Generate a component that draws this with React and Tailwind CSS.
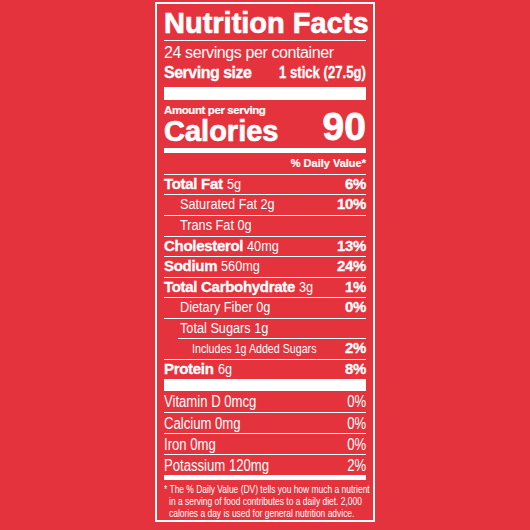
const sans = "font-['Liberation_Sans',Arial,sans-serif]";

const rows = [
  { label: 'Total Fat', value: '5g', dv: '6%', h: 'h-[19px]' },
  { label: 'Saturated Fat 2g', dv: '10%', indent: 1, h: 'h-[20px]' },
  { label: 'Trans Fat 0g', indent: 1, h: 'h-[20px]' },
  { label: 'Cholesterol', value: '40mg', dv: '13%', h: 'h-[19px]' },
  { label: 'Sodium', value: '560mg', dv: '24%', h: 'h-[20px]' },
  { label: 'Total Carbohydrate', value: '3g', dv: '1%', h: 'h-[19px]' },
  { label: 'Dietary Fiber 0g', dv: '0%', indent: 1, h: 'h-[20px]' },
  { label: 'Total Sugars 1g', indent: 1, h: 'h-[19px]', ruleIndent: true },
  { label: 'Includes 1g Added Sugars', dv: '2%', indent: 2, h: 'h-[20px]' },
  { label: 'Protein', value: '6g', dv: '8%', h: 'h-[19px]', last: true },
];

const vitamins = [
  { label: 'Vitamin D 0mcg', dv: '0%', h: 'h-[21px]' },
  { label: 'Calcium 0mg', dv: '0%', h: 'h-[20px]' },
  { label: 'Iron 0mg', dv: '0%', h: 'h-[20px]' },
  { label: 'Potassium 120mg', dv: '2%', h: 'h-[20px]', last: true },
];

// condensed text: no narrow face is installed, so squeeze Liberation Sans
function Cond({ children, right, className = '' }) {
  return (
    <span className={`inline-block whitespace-nowrap scale-x-[0.82] ${right ? 'origin-right' : 'origin-left'} ${className}`}>
      {children}
    </span>
  );
}

function Rule({ indent }) {
  return <div className={`h-px bg-white ${indent ? 'ml-[14px]' : ''}`} />;
}

function NutrientRow({ row }) {
  const pad = row.indent === 2 ? 'pl-[28px]' : row.indent === 1 ? 'pl-[16px]' : '';
  return (
    <>
      <div className={`${row.h} ${sans} flex justify-between items-start text-[15px] leading-[17px] ${pad}`}>
        <span className="whitespace-nowrap">
          {row.value ? (
            <>
              <b className="font-bold tracking-[-0.3px] [-webkit-text-stroke:0.3px_white]">{row.label}</b>{' '}
              <Cond className="text-[15.5px]">{row.value}</Cond>
            </>
          ) : (
            <Cond className={row.indent === 2 ? 'text-[13px]' : 'text-[15.5px]'}>{row.label}</Cond>
          )}
        </span>
        {row.dv && (
          <b className="font-bold tracking-[-0.3px] [-webkit-text-stroke:0.3px_white]">{row.dv}</b>
        )}
      </div>
      {!row.last && <Rule indent={row.ruleIndent} />}
    </>
  );
}

export default function App() {
  return (
    <div className="w-[530px] h-[530px] bg-[#e5333d] text-white overflow-hidden pt-[2px]">
      <div className={`${sans} mx-auto w-[220px] h-[520px] border-2 border-white px-[7px] overflow-hidden`}>
        <h1 className="mt-[3px] h-[33px] text-[29px] leading-[33px] font-bold whitespace-nowrap [-webkit-text-stroke:0.7px_white]">
          Nutrition Facts
        </h1>
        <Rule />
        <p className="mt-[3px] text-[16px] leading-[18px] tracking-[-0.4px] whitespace-nowrap">
          24 servings per container
        </p>
        <div className="mt-[2px] flex justify-between text-[16px] leading-[18px] font-bold whitespace-nowrap">
          <span className="tracking-[-0.5px] [-webkit-text-stroke:0.3px_white]">Serving size</span>
          <Cond right className="[-webkit-text-stroke:0.3px_white]">1 stick (27.5g)</Cond>
        </div>
        <div className="mt-[5px] h-[13px] bg-white" />
        <p className="mt-[4px] text-[11.5px] leading-[13px] font-bold tracking-[-0.4px] [-webkit-text-stroke:0.2px_white]">
          Amount per serving
        </p>
        <div className="h-[31px] flex justify-between items-start">
          <span className="mt-[1.5px] text-[29px] leading-[24px] font-bold [-webkit-text-stroke:0.7px_white]">Calories</span>
          <span className="text-[39px] leading-[20px] font-bold [-webkit-text-stroke:0.8px_white]">90</span>
        </div>
        <div className="h-[5px] bg-white" />
        <div className="h-[21px] pt-[3px] text-right text-[11px] leading-[15px] font-bold [-webkit-text-stroke:0.2px_white]">
          % Daily Value*
        </div>
        <Rule />
        {rows.map((r) => (
          <NutrientRow key={r.label} row={r} />
        ))}
        <div className="h-[12px] bg-white" />
        {vitamins.map((v) => (
          <div key={v.label}>
            <div className={`${v.h} pt-[1px] flex justify-between text-[16px] leading-[20px]`}>
              <Cond>{v.label}</Cond>
              <Cond right>{v.dv}</Cond>
            </div>
            {!v.last && <Rule />}
          </div>
        ))}
        <div className="h-[5px] bg-white" />
        <div className="pt-[4px] text-[10.3px] leading-[12px]">
          <div><Cond>* The % Daily Value (DV) tells you how much a nutrient</Cond></div>
          <div className="pl-[5px]"><Cond>in a serving of food contributes to a daily diet. 2,000</Cond></div>
          <div className="pl-[5px]"><Cond>calories a day is used for general nutrition advice.</Cond></div>
        </div>
      </div>
    </div>
  );
}
